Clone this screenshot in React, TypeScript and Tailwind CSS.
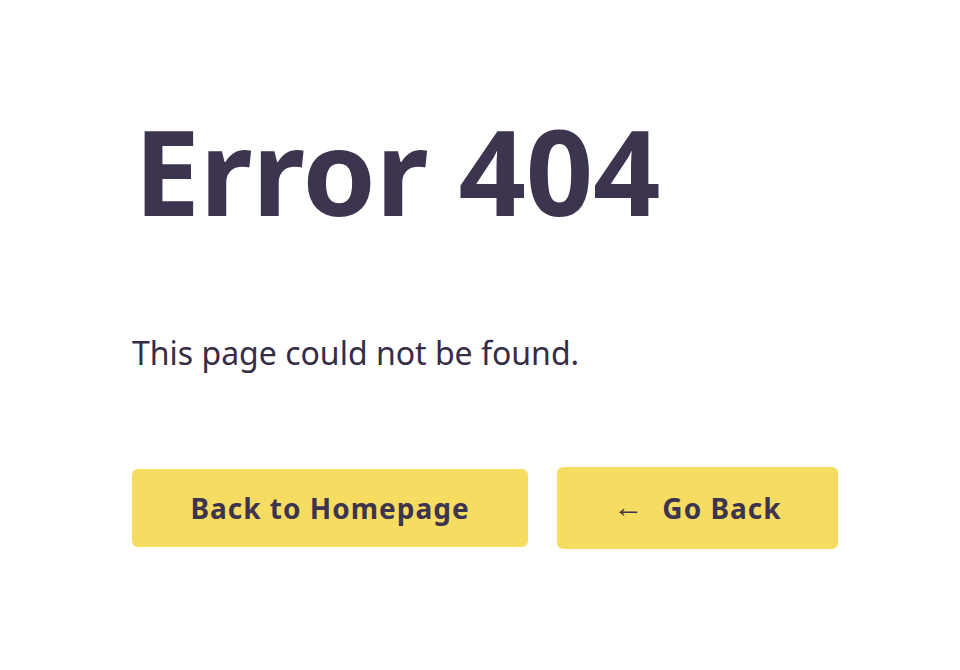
export default function App() {
  return (
    <div
      className="min-h-[670px] w-[960px] bg-white pl-[132px] pt-[100px] text-[#3d3450]"
      style={{ fontFamily: '"Noto Sans", sans-serif' }}
    >
      <h1 className="ml-[2px] text-[118px] font-bold leading-[1.2] tracking-[-0.3px]">Error 404</h1>
      <p className="mt-[90px] text-[32px] leading-[1.3] text-[#342d45]">
        This page could not be found.
      </p>
      <div className="mt-[94px] flex items-center gap-[29px]">
        <button className="h-[78px] w-[396px] rounded-[6px] bg-[#f7dc62] text-[28px] font-bold tracking-[1px]">
          Back to Homepage
        </button>
        <button className="flex h-[82px] w-[281px] items-center justify-center gap-[18px] rounded-[6px] bg-[#f7dc62] text-[28px] font-bold tracking-[1px]">
          <span className="-mt-[4px] text-[30px] font-normal leading-none">←</span>
          <span className="leading-none">Go Back</span>
        </button>
      </div>
    </div>
  );
}
